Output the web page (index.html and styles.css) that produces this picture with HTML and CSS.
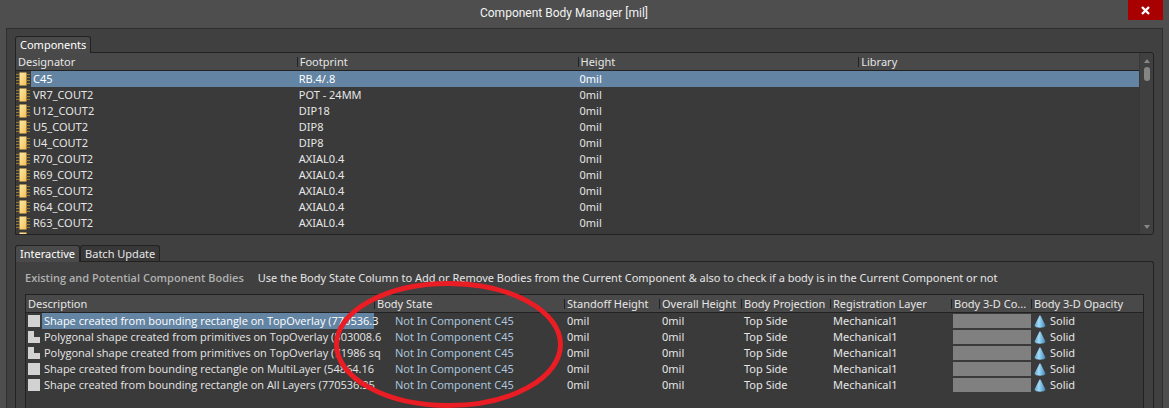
FILE: index.html
```
<!DOCTYPE html>
<html lang="en">
<head>
  <meta charset="UTF-8" />
  <meta name="viewport" content="width=device-width, initial-scale=1.0"/>
  <title>Component Body Manager [mil]</title>
  <link rel="stylesheet" href="styles.css">
</head>
<body>

  <!-- Shared icons -->
  <svg class="sprite" aria-hidden="true">
    <defs>
      <linearGradient id="chipFill" x1="0" y1="0" x2="1" y2="1">
        <stop offset="0" stop-color="#ffe9a8"/>
        <stop offset="1" stop-color="#f3bf55"/>
      </linearGradient>
      <linearGradient id="coneFill" x1="0" y1="0" x2="1" y2="0">
        <stop offset="0" stop-color="#5aa8da"/>
        <stop offset="0.4" stop-color="#a5daf5"/>
        <stop offset="1" stop-color="#3c86bd"/>
      </linearGradient>
      <symbol id="chip" viewBox="0 0 14 16">
        <path d="M0 3.5h14M0 6.5h14M0 9.5h14M0 12.5h14" stroke="#94782c"/>
        <rect x="3" y="1" width="8" height="14" fill="#4a3c1c"/>
        <rect x="3.5" y="1.5" width="7" height="13" fill="url(#chipFill)"/>
      </symbol>
      <symbol id="square" viewBox="0 0 12 12">
        <rect width="12" height="12" fill="#d2d2d2"/>
      </symbol>
      <symbol id="polygon" viewBox="0 0 12 12">
        <path d="M0 0h6v6h6v6H0z" fill="#d2d2d2"/>
      </symbol>
      <symbol id="cone" viewBox="0 0 12 13">
        <path d="M5.500 0.500H6.500L11.500 10.500C11 13.500 1 13.500 0.500 10.500z" fill="url(#coneFill)"/>
      </symbol>
    </defs>
  </svg>

  <header class="titlebar">
    <h1>Component Body Manager [mil]</h1>
    <button class="close-btn" aria-label="Close">
      <svg width="9" height="9" viewBox="0 0 9 9"><path d="M1 1L8 8M8 1L1 8" stroke="#fff" stroke-width="2.400"/></svg>
    </button>
  </header>

  <main class="client">

    <!-- Components -->
    <div class="tabs">
      <button class="tab active">Components</button>
    </div>
    <section class="components">
      <div class="list">
        <table id="componentTable">
          <thead>
            <tr><th>Designator</th><th>Footprint</th><th>Height</th><th>Library</th></tr>
          </thead>
          <tbody></tbody>
        </table>
      </div>
      <div class="scrollbar">
        <span class="arrow-up"></span>
        <span class="thumb"></span>
        <span class="arrow-down"></span>
      </div>
    </section>

    <!-- Bodies -->
    <div class="tabs tabs-lower">
      <button class="tab active">Interactive</button>
      <button class="tab">Batch Update</button>
    </div>
    <section class="bodies">
      <div class="hint">
        <h2>Existing and Potential Component Bodies</h2>
        <p>Use the Body State Column to Add or Remove Bodies from the Current Component &amp; also to check if a body is in the Current Component or not</p>
      </div>
      <div class="grid">
        <table id="bodyTable">
          <colgroup>
            <col class="col-description">
            <col class="col-state">
            <col class="col-standoff">
            <col class="col-overall">
            <col class="col-projection">
            <col class="col-layer">
            <col class="col-color">
            <col>
          </colgroup>
          <thead>
            <tr>
              <th>Description</th><th>Body State</th><th>Standoff Height</th><th>Overall Height</th>
              <th>Body Projection</th><th>Registration Layer</th><th>Body 3-D Co...</th><th>Body 3-D Opacity</th>
            </tr>
          </thead>
          <tbody></tbody>
        </table>
        <svg class="marker" viewBox="0 0 229 127" aria-hidden="true">
          <ellipse cx="114.500" cy="63.500" rx="112" ry="61" fill="none" stroke="#ea1c24" stroke-width="5"/>
        </svg>
      </div>
    </section>

  </main>

  <script>
    const components = [
      ["C45", "RB.4/.8"],
      ["VR7_COUT2", "POT - 24MM"],
      ["U12_COUT2", "DIP18"],
      ["U5_COUT2", "DIP8"],
      ["U4_COUT2", "DIP8"],
      ["R70_COUT2", "AXIAL0.4"],
      ["R69_COUT2", "AXIAL0.4"],
      ["R65_COUT2", "AXIAL0.4"],
      ["R64_COUT2", "AXIAL0.4"],
      ["R63_COUT2", "AXIAL0.4"],
      ["", ""]
    ];

    const bodies = [
      ["square", "Shape created from bounding rectangle on TopOverlay (770536.3"],
      ["polygon", "Polygonal shape created from primitives on TopOverlay (503008.6"],
      ["polygon", "Polygonal shape created from primitives on TopOverlay (71986 sq"],
      ["square", "Shape created from bounding rectangle on MultiLayer (54864.16"],
      ["square", "Shape created from bounding rectangle on All Layers (770536.35"]
    ];

    document.querySelector("#componentTable tbody").innerHTML = components.map(([name, footprint], i) => `
      <tr class="${i === 0 ? "selected" : ""}">
        <td><div class="cell"><svg class="chip"><use href="#chip"/></svg><span class="label">${name}</span></div></td>
        <td>${footprint}</td>
        <td>${name ? "0mil" : ""}</td>
        <td></td>
      </tr>`).join("");

    document.querySelector("#bodyTable tbody").innerHTML = bodies.map(([icon, text], i) => `
      <tr class="${i === 0 ? "selected" : ""}">
        <td><div class="cell"><svg class="shape"><use href="#${icon}"/></svg><span class="label">${text}</span></div></td>
        <td class="state">Not In Component C45</td>
        <td>0mil</td>
        <td>0mil</td>
        <td>Top Side</td>
        <td>Mechanical1</td>
        <td class="color"><div class="swatch"></div></td>
        <td><div class="cell opacity"><svg class="cone"><use href="#cone"/></svg>Solid</div></td>
      </tr>`).join("");
  </script>
</body>
</html>
```
FILE: styles.css
```
* { margin: 0; padding: 0; box-sizing: border-box; }

body {
  display: flex;
  flex-direction: column;
  height: 100vh;
  overflow: hidden;
  background: #4e4e4e;
  color: #e6e6e6;
  font-family: "Noto Sans", "Open Sans", sans-serif;
  font-size: 11px;
  line-height: 16px;
}

button { font: inherit; color: inherit; }

.sprite { position: absolute; width: 0; height: 0; }

/* Title bar */
.titlebar {
  display: grid;
  grid-template-columns: 1fr 35px 6px;
  flex: none;
  height: 28px;
}

.titlebar h1 {
  padding-top: 5px;
  font-family: Roboto, sans-serif;
  font-size: 12px;
  font-weight: normal;
  text-align: center;
  color: #f2f2f2;
}

.close-btn {
  display: flex;
  justify-content: center;
  align-items: center;
  height: 20px;
  border: none;
  background: #a80000;
}

/* Client area */
.client {
  display: flex;
  flex-direction: column;
  flex: 1;
  min-height: 0;
  margin: 0 6px;
  padding: 7px 8px 0;
  border: 1px solid #2e2e2e;
  border-bottom: none;
  background: #404040;
}

.tabs {
  display: flex;
  flex: none;
  height: 16px;
}

.tabs-lower { margin-top: 10px; }

.tab {
  padding: 0 4px;
  border: 1px solid #222;
  border-bottom: none;
  border-radius: 3px 3px 0 0;
  background: #383838;
  line-height: 14px;
}

.tab.active {
  height: 17px;
  background: #4a4a4a;
  color: #fff;
  z-index: 1;
}

/* Tables */
table {
  width: 100%;
  border-collapse: separate;
  border-spacing: 0;
  table-layout: fixed;
}

th {
  position: relative;
  height: 18px;
  padding-left: 3px;
  border-bottom: 1px solid #222;
  background: #494949;
  font-weight: normal;
  line-height: 17px;
  text-align: left;
  white-space: nowrap;
}

th:first-child { padding-left: 2px; }

th + th::before {
  content: "";
  position: absolute;
  left: 0;
  top: 4px;
  width: 1px;
  height: 10px;
  background: #222;
}

td {
  height: 16px;
  padding-left: 3px;
  white-space: nowrap;
}

td:first-child { padding-left: 0; }

.cell {
  display: flex;
  align-items: center;
  height: 16px;
}

.cell .label {
  flex: 1;
  min-width: 0;
  height: 16px;
  padding-left: 2px;
}

.selected .label { background: #6384a3; color: #fff; }

#bodyTable .label { font-family: "Open Sans", sans-serif; }

.chip {
  flex: none;
  width: 14px;
  height: 16px;
  margin-right: 1px;
}

/* Component list */
.components {
  display: flex;
  flex: none;
  height: 183px;
  border: 1px solid #222;
  border-radius: 0 3px 3px 0;
}

.list {
  flex: 1;
  overflow: hidden;
  background: #3a3a3a;
}

.list td + td { padding-left: 2px; }

.list .selected td { background: #6384a3; color: #fff; }
.list .selected td:first-child { background: none; }

.scrollbar {
  display: flex;
  flex-direction: column;
  align-items: center;
  width: 14px;
  padding: 6px 0 5px;
  border-left: 1px solid #383838;
}

.arrow-up,
.arrow-down {
  border: 3px solid transparent;
}

.arrow-up { border-top: none; border-bottom: 4px solid #888; }
.arrow-down { margin-top: auto; border-bottom: none; border-top: 4px solid #888; }

.thumb {
  width: 6px;
  height: 14px;
  margin-top: 4px;
  border-radius: 3px;
  background: #858585;
}

/* Body editor */
.bodies {
  display: flex;
  flex-direction: column;
  flex: 1;
  min-height: 0;
  padding: 8px 9px 0;
  border: 1px solid #222;
  border-bottom: none;
  border-radius: 0 3px 0 0;
}

.hint {
  display: flex;
  gap: 14px;
  height: 24px;
  white-space: nowrap;
}

.hint h2 {
  font-family: "Open Sans", sans-serif;
  font-size: 11px;
  font-weight: 600;
  color: #b0b0b0;
}

.grid {
  position: relative;
  flex: 1;
  border: 1px solid #222;
  border-bottom: none;
  background: #3a3a3a;
}

.col-description { width: 348px; }
.col-state { width: 190px; }
.col-standoff { width: 95px; }
.col-overall { width: 82px; }
.col-projection { width: 89px; }
.col-layer { width: 121px; }
.col-color { width: 80px; }

.shape {
  flex: none;
  width: 12px;
  height: 12px;
  margin: 0 2px;
}

.state { padding-left: 21px; color: #a9c4dc; }

.color { padding-left: 2px; }

.swatch {
  height: 14px;
  background: #808080;
}

.opacity { gap: 4px; }

.cone {
  width: 12px;
  height: 13px;
}

/* Red ring round the Body State column */
.marker {
  position: absolute;
  left: 308px;
  top: -14px;
  width: 229px;
  height: 127px;
}
```
